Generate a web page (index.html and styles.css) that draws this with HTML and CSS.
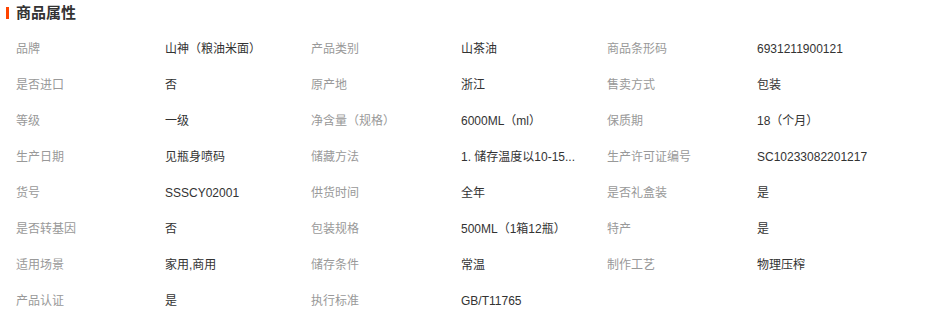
FILE: index.html
```html
<!DOCTYPE html>
<html lang="zh-CN">
<head>
<meta charset="utf-8">
<title>商品属性</title>
<link rel="stylesheet" href="styles.css">
</head>
<body>
<div class="attrs">
  <h3 class="attrs-title"><span class="bar"></span>商品属性</h3>
  <div class="attrs-grid">
    <div class="k">品牌</div><div class="v">山神（粮油米面）</div>
    <div class="k">产品类别</div><div class="v">山茶油</div>
    <div class="k">商品条形码</div><div class="v">6931211900121</div>

    <div class="k">是否进口</div><div class="v">否</div>
    <div class="k">原产地</div><div class="v">浙江</div>
    <div class="k">售卖方式</div><div class="v">包装</div>

    <div class="k">等级</div><div class="v">一级</div>
    <div class="k">净含量（规格）</div><div class="v">6000ML（ml）</div>
    <div class="k">保质期</div><div class="v">18（个月）</div>

    <div class="k">生产日期</div><div class="v">见瓶身喷码</div>
    <div class="k">储藏方法</div><div class="v">1. 储存温度以10-15...</div>
    <div class="k">生产许可证编号</div><div class="v">SC10233082201217</div>

    <div class="k">货号</div><div class="v">SSSCY02001</div>
    <div class="k">供货时间</div><div class="v">全年</div>
    <div class="k">是否礼盒装</div><div class="v">是</div>

    <div class="k">是否转基因</div><div class="v">否</div>
    <div class="k">包装规格</div><div class="v">500ML（1箱12瓶）</div>
    <div class="k">特产</div><div class="v">是</div>

    <div class="k">适用场景</div><div class="v">家用,商用</div>
    <div class="k">储存条件</div><div class="v">常温</div>
    <div class="k">制作工艺</div><div class="v">物理压榨</div>

    <div class="k">产品认证</div><div class="v">是</div>
    <div class="k">执行标准</div><div class="v">GB/T11765</div>
  </div>
</div>
</body>
</html>
```
FILE: styles.css
```css
html, body {
  margin: 0;
  padding: 0;
  background: #fff;
}
body {
  font-family: "Liberation Sans", "Noto Sans CJK SC", sans-serif;
  font-size: 12px;
  color: #333;
}
.attrs-title {
  margin: 0;
  height: 26px;
  display: flex;
  align-items: center;
  padding-left: 6px;
  box-sizing: border-box;
  font-size: 15px;
  line-height: 20px;
  font-weight: bold;
  color: #333;
}
.attrs-title .bar {
  display: inline-block;
  width: 3px;
  height: 12px;
  background: #ff4400;
  margin-right: 7px;
}
.attrs-grid {
  display: grid;
  grid-template-columns: 149px 146px 150px 146px 150px 1fr;
  grid-auto-rows: 36px;
  padding-left: 16px;
  margin-top: 5px;
}
.k, .v {
  line-height: 36px;
  white-space: nowrap;
}
.k {
  color: #999;
}
.v {
  color: #333;
}
```
